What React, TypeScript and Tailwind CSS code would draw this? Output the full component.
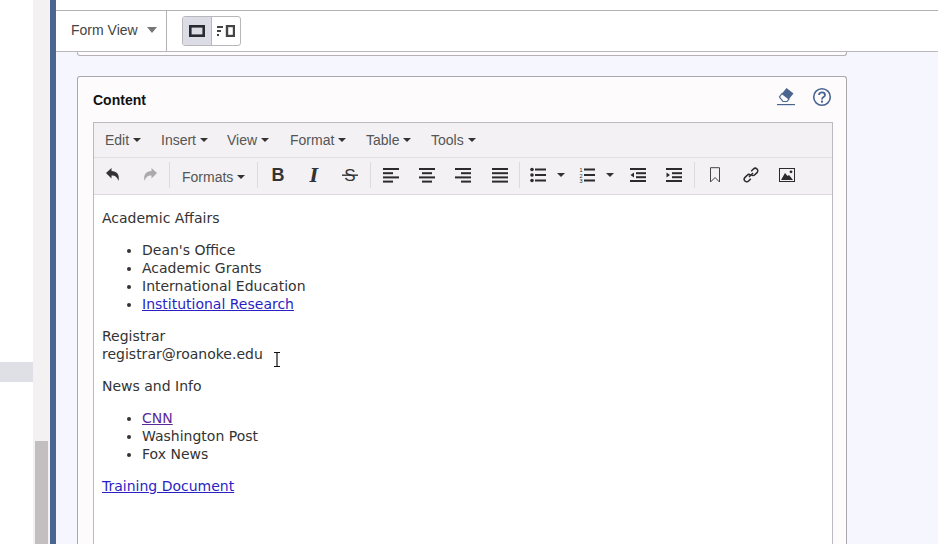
const Caret = ({ className = "ml-1" }: { className?: string }) => (
  <span className={`inline-block h-0 w-0 border-x-4 border-t-4 border-x-transparent border-t-[#333] ${className}`} />
);

const Sep = () => <div className="mx-[1px] h-[26px] w-px shrink-0 bg-[#dcdadc]" />;

const Tool = ({ children, width = "w-9" }: { children: React.ReactNode; width?: string }) => (
  <div className={`flex h-full shrink-0 items-center justify-center ${width}`}>{children}</div>
);

const lines = (rows: [number, number][], color = "#2b2b2b") => (
  <svg width="16" height="16" viewBox="0 0 16 16">
    {rows.map(([x, w], i) => (
      <rect key={i} x={x} y={1 + i * 4.2} width={w} height="2" fill={color} />
    ))}
  </svg>
);

const menus = [
  { label: "Edit", width: "w-[56px]" },
  { label: "Insert", width: "w-[66px]" },
  { label: "View", width: "w-[63px]" },
  { label: "Format", width: "w-[76px]" },
  { label: "Table", width: "w-[65px]" },
  { label: "Tools", width: "w-[60px]" },
];

const App = () => {
  return (
    <div className="flex h-[544px] w-[938px] overflow-hidden bg-white font-['Liberation_Sans',sans-serif]">
      <div className="w-[33px] shrink-0 bg-white pt-[362px]">
        <div className="h-5 bg-[#dfdfe6]" />
      </div>
      <div className="flex w-[17px] shrink-0 flex-col bg-[#f3f1f2] pt-[441px]">
        <div className="mx-[2px] flex-1 bg-[#c3bfc0]" />
      </div>
      <div className="w-[6px] shrink-0 bg-[#4a6590]" />

      <main className="flex min-w-0 flex-1 flex-col bg-[#f6f6fe]">
        <div className="h-[11px] shrink-0 border-b border-[#b3b1b3] bg-white" />
        <div className="flex h-[41px] shrink-0 items-center border-b border-[#b9b7bb] bg-white">
          <div className="flex h-full w-[111px] items-center border-r border-[#b3b1b3] pb-[2px] pl-[15px] text-sm text-[#444]">
            Form View
            <span className="ml-[9px] h-0 w-0 border-x-[5px] border-t-[6px] border-x-transparent border-t-[#777]" />
          </div>
          <div className="ml-[15px] flex h-[30px] w-[59px] overflow-hidden rounded-[3px] border border-[#b9b7bb]">
            <div className="flex w-[29px] items-center justify-center border-r border-[#b9b7bb] bg-[#dcdce6]">
              <svg width="16" height="12" viewBox="0 0 16 12">
                <rect x="1.3" y="1.3" width="13.4" height="9.4" fill="none" stroke="#2a2a33" strokeWidth="2.6" />
              </svg>
            </div>
            <div className="flex flex-1 items-center justify-center">
              <svg width="18" height="12" viewBox="0 0 18 12">
                <rect x="0" y="1" width="6" height="2" fill="#444" />
                <rect x="0" y="5" width="4" height="2" fill="#444" />
                <rect x="0" y="9" width="2" height="2" fill="#444" />
                <rect x="10" y="1" width="7" height="10" fill="none" stroke="#444" strokeWidth="2.4" />
              </svg>
            </div>
          </div>
        </div>

        <div className="mx-[21px] h-1 w-[770px] shrink-0 rounded-b-[3px] border-x border-b border-[#b3b1b3] bg-[#fefbfd]" />

        <section className="mx-[21px] mt-[20px] w-[770px] flex-1 rounded-t-[3px] border-x border-t border-[#a9a8ad] bg-[#fefbfd] pr-[13px] pl-[15px]">
          <div className="flex h-[45px] items-start justify-between">
            <h2 className="mt-[15px] text-sm leading-4 font-bold text-[#111]">Content</h2>
            <div className="mt-[10px] mr-[1px] flex items-center gap-[16px]">
              <svg width="20" height="20" viewBox="0 0 20 20">
                <path d="M10.5 1 L17.5 6.5 L13 12 L6 6.5 Z" fill="#4a6590" />
                <path d="M6 6.5 L13 12 L11 14.5 L7 14.5 L3.5 10 Z" fill="none" stroke="#4a6590" strokeWidth="1.2" />
                <rect x="1" y="17" width="18" height="1.2" fill="#4a6590" />
              </svg>
              <svg width="20" height="20" viewBox="0 0 20 20">
                <circle cx="10" cy="10" r="8.3" fill="none" stroke="#4a6590" strokeWidth="1.6" />
                <path d="M7 8 C7 4.6 13 4.6 13 8 C13 10.2 10 10 10 12.4" fill="none" stroke="#4a6590" strokeWidth="1.8" />
                <rect x="9" y="13.6" width="2" height="2" fill="#4a6590" />
              </svg>
            </div>
          </div>

          <div className="h-[500px] border border-[#bdb9bd] bg-white">
            <div className="flex h-[35px] items-center border-b border-[#e2dfe2] bg-[#f3f1f3] pl-[11px] text-sm text-[#555]">
              {menus.map((menu) => (
                <div key={menu.label} className={`flex items-center ${menu.width}`}>
                  {menu.label}
                  <Caret />
                </div>
              ))}
            </div>

            <div className="flex h-[37px] items-center border-b border-[#dcdadc] bg-[#f3f1f3] pb-[2px] pl-px">
              <Tool>
                <svg width="16" height="16" viewBox="0 0 16 16">
                  <path d="M1 6 L6.5 1 V4 C11.5 4 15 7.5 13.5 14 C12.5 10.5 10.5 8.5 6.5 8.5 V11.5 Z" fill="#333" />
                </svg>
              </Tool>
              <Tool width="w-[37px]">
                <svg width="16" height="16" viewBox="0 0 16 16">
                  <path d="M15 6 L9.5 1 V4 C4.5 4 1 7.5 2.5 14 C3.5 10.5 5.5 8.5 9.5 8.5 V11.5 Z" fill="#aaa" />
                </svg>
              </Tool>
              <Sep />
              <div className="flex h-full w-[85px] shrink-0 items-center pt-[4px] pl-[11px] text-sm text-[#555]">
                Formats
                <Caret />
              </div>
              <Sep />
              <div className="w-px" />
              <Tool>
                <span className="text-[18px] font-bold text-[#333]">B</span>
              </Tool>
              <Tool>
                <span className="font-['DejaVu_Serif',serif] text-[18px] font-bold italic text-[#333]">I</span>
              </Tool>
              <Tool width="w-[35px]">
                <svg width="16" height="18" viewBox="0 0 16 18">
                  <text x="8" y="15" textAnchor="middle" fontSize="17" fill="#333">S</text>
                  <rect x="0" y="8.5" width="16" height="1.4" fill="#333" />
                </svg>
              </Tool>
              <div className="w-[2px] shrink-0" />
              <Sep />
              <div className="w-px" />
              <Tool>{lines([[0, 16], [0, 10], [0, 16], [0, 10]])}</Tool>
              <Tool>{lines([[0, 16], [3, 10], [0, 16], [3, 10]])}</Tool>
              <Tool>{lines([[0, 16], [6, 10], [0, 16], [6, 10]])}</Tool>
              <Tool width="w-[37px]">{lines([[0, 16], [0, 16], [0, 16], [0, 16]])}</Tool>
              <Sep />
              <div className="w-px" />
              <Tool width="w-[32px]">
                <svg width="16" height="16" viewBox="0 0 16 16" fill="#2b2b2b">
                  <circle cx="2" cy="2.5" r="1.8" />
                  <circle cx="2" cy="8" r="1.8" />
                  <circle cx="2" cy="13.5" r="1.8" />
                  <rect x="5" y="1.5" width="11" height="2" />
                  <rect x="5" y="7" width="11" height="2" />
                  <rect x="5" y="12.5" width="11" height="2" />
                </svg>
              </Tool>
              <Tool width="w-[14px]">
                <Caret className="" />
              </Tool>
              <Tool width="w-[38px]">
                <svg width="16" height="16" viewBox="0 0 16 16" fill="#2b2b2b">
                  <text x="2" y="5" textAnchor="middle" fontSize="5.5">1</text>
                  <text x="2" y="10.5" textAnchor="middle" fontSize="5.5">2</text>
                  <text x="2" y="16" textAnchor="middle" fontSize="5.5">3</text>
                  <rect x="5" y="1.5" width="11" height="2" />
                  <rect x="5" y="7" width="11" height="2" />
                  <rect x="5" y="12.5" width="11" height="2" />
                </svg>
              </Tool>
              <Tool width="w-[8px]">
                <Caret className="" />
              </Tool>
              <Tool width="w-[48px]">
                <svg width="16" height="16" viewBox="0 0 16 16" fill="#2b2b2b">
                  <rect x="0" y="1" width="16" height="2" />
                  <rect x="6" y="5.2" width="10" height="2" />
                  <rect x="6" y="9.2" width="10" height="2" />
                  <rect x="0" y="13" width="16" height="2" />
                  <path d="M4 5.5 V10.5 L0.5 8 Z" />
                </svg>
              </Tool>
              <Tool width="w-[24px]">
                <svg width="16" height="16" viewBox="0 0 16 16" fill="#2b2b2b">
                  <rect x="0" y="1" width="16" height="2" />
                  <rect x="6" y="5.2" width="10" height="2" />
                  <rect x="6" y="9.2" width="10" height="2" />
                  <rect x="0" y="13" width="16" height="2" />
                  <path d="M0.5 5.5 V10.5 L4 8 Z" />
                </svg>
              </Tool>
              <div className="w-[7px] shrink-0" />
              <Sep />
              <div className="w-px" />
              <Tool>
                <svg width="12" height="16" viewBox="0 0 12 16">
                  <path d="M1.5 0.7 H10.5 V15 L6 10.5 L1.5 15 Z" fill="none" stroke="#444" strokeWidth="1" />
                </svg>
              </Tool>
              <Tool>
                <svg width="16" height="16" viewBox="0 0 16 16" fill="none" stroke="#2b2b2b" strokeWidth="1.5">
                  <path d="M6 10 L10 6" />
                  <path d="M8.2 4.2 L10.4 2 C11.4 1 13 1 14 2 C15 3 15 4.6 14 5.6 L11.8 7.8 C10.8 8.8 9.4 8.8 8.4 7.8" />
                  <path d="M7.8 11.8 L5.6 14 C4.6 15 3 15 2 14 C1 13 1 11.4 2 10.4 L4.2 8.2 C5.2 7.2 6.6 7.2 7.6 8.2" />
                </svg>
              </Tool>
              <Tool>
                <svg width="16" height="14" viewBox="0 0 16 14">
                  <rect x="0.5" y="0.5" width="15" height="13" fill="none" stroke="#2b2b2b" />
                  <path d="M2 12 L6 5 L8.5 8 L10 7 L14 12 Z" fill="#2b2b2b" />
                  <circle cx="12" cy="3.8" r="1.4" fill="#2b2b2b" />
                </svg>
              </Tool>
            </div>

            <div className="px-2 pt-[14px] font-['DejaVu_Sans',sans-serif] text-sm leading-[18px] text-[#333]">
              <p>Academic Affairs</p>
              <ul className="my-[14px] list-disc pl-10">
                <li>Dean's Office</li>
                <li>Academic Grants</li>
                <li>International Education</li>
                <li>
                  <a href="#" className="text-[#2a1fc4] underline">Institutional Research</a>
                </li>
              </ul>
              <p>
                Registrar
                <br />
                registrar@roanoke.edu
              </p>
              <p className="mt-[14px]">News and Info</p>
              <ul className="my-[14px] list-disc pl-10">
                <li>
                  <a href="#" className="text-[#5b2a9a] underline">CNN</a>
                </li>
                <li>Washington Post</li>
                <li>Fox News</li>
              </ul>
              <p>
                <a href="#" className="text-[#2a1fc4] underline">Training Document</a>
              </p>
            </div>
          </div>
        </section>
      </main>

      {/* text cursor sitting over the editor */}
      <svg className="absolute top-[352px] left-[273px]" width="8" height="15" viewBox="0 0 8 15">
        <path d="M1 0.5 H7 M4 0.5 V14.5 M1 14.5 H7" fill="none" stroke="#111" strokeWidth="1.2" />
      </svg>
    </div>
  );
};

export default App;
